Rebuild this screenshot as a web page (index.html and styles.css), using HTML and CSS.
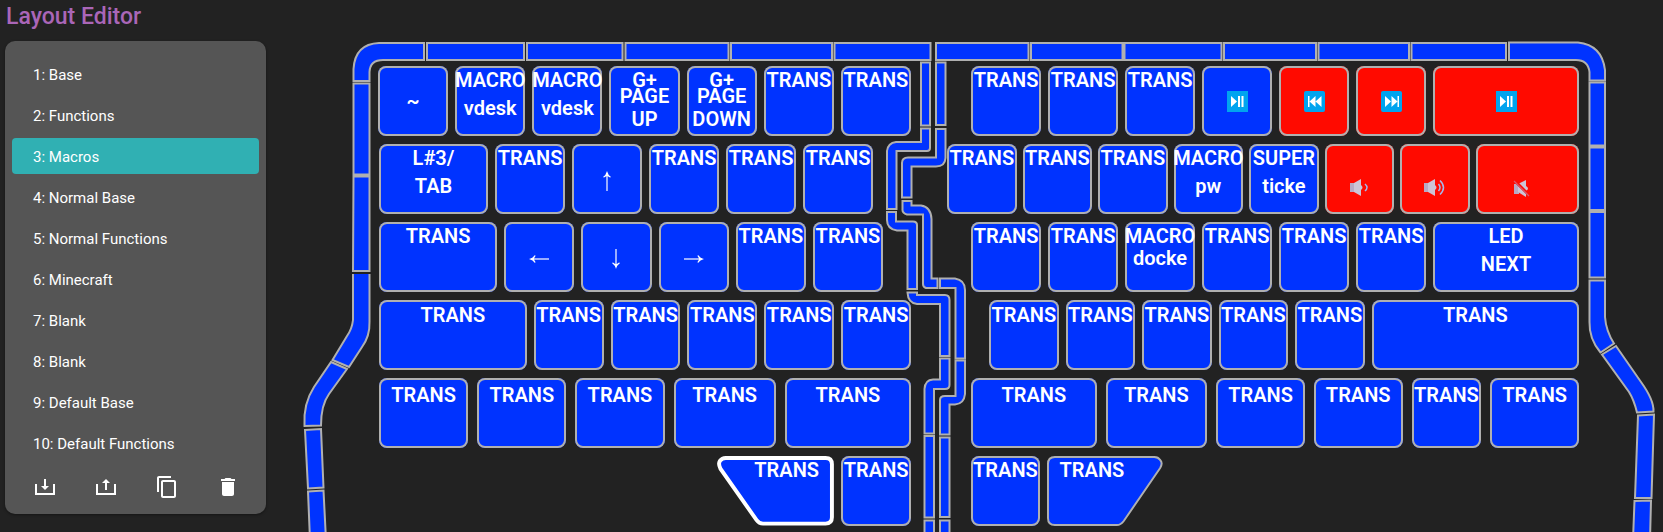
FILE: index.html
```html
<!DOCTYPE html>
<html lang="en">
<head>
<meta charset="utf-8">
<title>Layout Editor</title>
<link rel="stylesheet" href="styles.css">
</head>
<body>
<svg class="defs" aria-hidden="true">
  <symbol id="play-pause" viewBox="0 0 21 21"><path fill="#00a4ef" d="M0 0h21v21H0z"/><path fill="#fff" d="M4 5l6 5.500-6 5.500zM11 5h2v11h-2zM14.500 5h2v11h-2z"/></symbol>
  <symbol id="previous" viewBox="0 0 21 21"><rect width="21" height="21" rx="2" fill="#00a4ef"/><path fill="#fff" d="M4 5h1.500v11H4zM11.500 5v11l-6-5.500zM17.500 5v11l-6-5.500z"/></symbol>
  <symbol id="next" viewBox="0 0 21 21"><rect width="21" height="21" rx="2" fill="#00a4ef"/><path fill="#fff" d="M4 5l6 5.500L4 16zM10.500 5l6 5.500-6 5.500zM16.500 5H18v11h-1.500z"/></symbol>
  <symbol id="arrow" viewBox="0 0 22 22"><path fill="none" stroke="#fff" stroke-width="1.200" d="M21 11H3"/><path fill="#fff" d="M1 11Q5 10 7 7L7.500 8Q6 10 6 11Q6 12 7.500 14L7 15Q5 12 1 11Z"/></symbol>
</svg>
<h1 class="title">Layout Editor</h1>
<div class="editor">
  <aside class="layers">
    <button class="layer">1: Base</button>
    <button class="layer">2: Functions</button>
    <button class="layer layer-active" aria-current="true">3: Macros</button>
    <button class="layer">4: Normal Base</button>
    <button class="layer">5: Normal Functions</button>
    <button class="layer">6: Minecraft</button>
    <button class="layer">7: Blank</button>
    <button class="layer">8: Blank</button>
    <button class="layer">9: Default Base</button>
    <button class="layer">10: Default Functions</button>
    <div class="tools">
      <button class="tool" aria-label="Import"><svg viewBox="0 0 24 24"><path fill="none" stroke="#fff" stroke-width="2" d="M3 9v10h18V9M12 4v8"/><path fill="#fff" d="M8 11h8l-4 4z"/></svg></button>
      <button class="tool" aria-label="Export"><svg viewBox="0 0 24 24"><path fill="none" stroke="#fff" stroke-width="2" d="M3 9v10h18V9M12 7v8"/><path fill="#fff" d="M8 8h8l-4-4z"/></svg></button>
      <button class="tool" aria-label="Copy"><svg viewBox="0 0 24 24"><path fill="#fff" d="M16 1H4c-1.100 0-2 .9-2 2v14h2V3h12V1zm3 4H8c-1.100 0-2 .9-2 2v14c0 1.100.9 2 2 2h11c1.100 0 2-.9 2-2V7c0-1.100-.9-2-2-2zm0 16H8V7h11v14z"/></svg></button>
      <button class="tool" aria-label="Delete"><svg viewBox="0 0 24 24"><path fill="#fff" d="M6 19c0 1.100.9 2 2 2h8c1.100 0 2-.9 2-2V7H6v12zM19 4h-3.500l-1-1h-5l-1 1H5v2h14V4z"/></svg></button>
    </div>
  </aside>

  <main class="board">
    <svg class="lights" viewBox="290 41 1373 491" preserveAspectRatio="none" aria-hidden="true">
      <!-- top edge -->
      <path d="M353.500 81V69Q355 44 379 43H424V60H383Q370 60 369.500 72V81Z"/>
      <path d="M427 43H524V60H427ZM527 43H622.500V60H527ZM625.500 43H728.500V60H625.500ZM731 43H832V60H731ZM834.500 43H930.500V60H834.500Z"/>
      <path d="M936 43H1028.500V60H936ZM1031 43H1122.500V60H1031ZM1124.500 43H1221.500V60H1124.500ZM1224 43H1316V60H1224ZM1318.500 43H1409V60H1318.500ZM1411.500 43H1506V60H1411.500Z"/>
      <path d="M1509 42.500H1578Q1602 45 1605 70V80.500H1589.500V72Q1588 60 1576 60H1509Z"/>
      <!-- left edge -->
      <path d="M353.500 83.500H369.500V174.500H353.500ZM353.500 176.500H369.500V271H353Z"/>
      <path d="M353 274V320Q352 329 347 336L332.500 360L349 367L362 347Q370 336 369.500 322V274"/>
      <path d="M331 362L347 369L329 394Q321 405 321 425.500L304.500 426Q303 404 314 387Z"/>
      <path d="M305 430L321 429L323.500 487.500L308 488.500ZM308 491.500L323.500 490.500L326 540H310Z"/>
      <!-- right edge -->
      <path d="M1589.500 82.500H1605V145.500H1589.500ZM1589.500 147.500H1605V210H1589.500ZM1589.500 212H1605V277.500H1589.500Z"/>
      <path d="M1589.500 280.500H1605V317Q1606 331 1614 343.500L1600.500 352.500Q1589 339 1589.500 322Z"/>
      <path d="M1602 354.500L1616 346L1641 382Q1654 400 1653.500 411.500L1637 412.500Q1634 400 1629 392Z"/>
      <path d="M1638 415.500L1654 414.500L1651.500 498H1635ZM1634.500 501L1651 500.500L1650 540H1633Z"/>
      <!-- inner edge of the left half -->
      <path d="M921 62.500H930V125.500H921ZM921 128.500H930V148Q930 151 927 151H896.500V209H887V151Q888 143 896 142H921Z"/>
      <path d="M887 212H896V221.500H913Q917 221.500 917 225V289H907.500V230.500H897Q887 229 887 220Z"/>
      <path d="M907.500 292.500H917V295H945Q949.500 295 949.500 300V356H940V304H917Q908 303 907.500 292.500Z"/>
      <path d="M940 358.500H949.500V385Q949.500 389 945 389H934V433.500H924.500V389Q925 380 933 379.500H940ZM924.500 436H934V517.500H924.500ZM924.500 520.500H934V540H924.500Z"/>
      <!-- inner edge of the right half -->
      <path d="M936 62.500H945.500V125H936ZM936 129H945.500V158Q945 166.500 936 166.500H911.500V197.500H902V163Q902 157.500 908 157.500H936Z"/>
      <path d="M902.500 201H911.500V205.500H921Q931 207 931.500 219V278.500H937.500V288H926Q923 287 923 284V214.500H907Q902 213 902.500 209Z"/>
      <path d="M940 278.500H955Q965 280 965 290V358.500H955.500V288H940Z"/>
      <path d="M955.500 360.500H965V394Q964 404 955 404.500H949.500V434.500H940V400Q940 396 945 396H955.500ZM940 437.500H949.500V517H940ZM940 520.500H949.500V540H940Z"/>
    </svg>

    <div class="half half-left">
      <div class="row">
        <button class="key center"><span>~</span></button>
        <button class="key"><span>MACRO</span><span>vdesk</span></button>
        <button class="key"><span>MACRO</span><span>vdesk</span></button>
        <button class="key"><span>G+</span><span class="tuck">PAGE</span><span class="last">UP</span></button>
        <button class="key"><span>G+</span><span class="tuck">PAGE</span><span class="last">DOWN</span></button>
        <button class="key"><span>TRANS</span></button>
        <button class="key"><span>TRANS</span></button>
      </div>
      <div class="row row-tab">
        <button class="key w109"><span>L#3/</span><span>TAB</span></button>
        <button class="key"><span>TRANS</span></button>
        <button class="key center" aria-label="Up"><svg class="arrow up"><use href="#arrow"/></svg></button>
        <button class="key"><span>TRANS</span></button>
        <button class="key"><span>TRANS</span></button>
        <button class="key"><span>TRANS</span></button>
      </div>
      <div class="row row-caps">
        <button class="key w118"><span>TRANS</span></button>
        <button class="key center" aria-label="Left"><svg class="arrow"><use href="#arrow"/></svg></button>
        <button class="key center" aria-label="Down"><svg class="arrow down"><use href="#arrow"/></svg></button>
        <button class="key center" aria-label="Right"><svg class="arrow right"><use href="#arrow"/></svg></button>
        <button class="key"><span>TRANS</span></button>
        <button class="key"><span>TRANS</span></button>
      </div>
      <div class="row row-shift row-shift-left">
        <button class="key w148"><span>TRANS</span></button>
        <button class="key"><span>TRANS</span></button>
        <button class="key"><span>TRANS</span></button>
        <button class="key"><span>TRANS</span></button>
        <button class="key"><span>TRANS</span></button>
        <button class="key"><span>TRANS</span></button>
      </div>
      <div class="row row-mods row-mods-left">
        <button class="key w89"><span>TRANS</span></button>
        <button class="key w89"><span>TRANS</span></button>
        <button class="key w89"><span>TRANS</span></button>
        <button class="key w102"><span>TRANS</span></button>
        <button class="key w126"><span>TRANS</span></button>
      </div>
      <div class="row row-thumb-left">
        <button class="key thumb thumb-left">
          <svg class="shape" viewBox="0 0 120 72" preserveAspectRatio="none"><path fill="#03f" stroke="#fff" stroke-width="4" d="M9 2H111Q117.500 2 117.500 8.500V63Q117.500 69.500 111 69.500H47Q43 69.500 40.500 66L3.500 13Q1 8 3 5Q5 2 9 2Z"/></svg>
          <span>TRANS</span>
        </button>
        <button class="key"><span>TRANS</span></button>
      </div>
    </div>

    <div class="half half-right">
      <div class="row row-inset">
        <button class="key"><span>TRANS</span></button>
        <button class="key"><span>TRANS</span></button>
        <button class="key"><span>TRANS</span></button>
        <button class="key center" aria-label="Play or pause"><svg class="media"><use href="#play-pause"/></svg></button>
        <button class="key red center" aria-label="Previous track"><svg class="media"><use href="#previous"/></svg></button>
        <button class="key red center" aria-label="Next track"><svg class="media"><use href="#next"/></svg></button>
        <button class="key red center w146" aria-label="Play or pause"><svg class="media"><use href="#play-pause"/></svg></button>
      </div>
      <div class="row row-dense">
        <button class="key"><span>TRANS</span></button>
        <button class="key"><span>TRANS</span></button>
        <button class="key"><span>TRANS</span></button>
        <button class="key"><span>MACRO</span><span>pw</span></button>
        <button class="key"><span>SUPER</span><span>ticke</span></button>
        <button class="key red center low" aria-label="Volume down"><svg class="media" viewBox="0 0 21 21"><path fill="#b8a9c4" d="M1 6h5v9H1z"/><path fill="#cdc4d6" d="M5 6l7-4v17l-7-4z"/><path fill="#cdc4d6" d="M12 8q3 2.500 0 5z"/><path fill="none" stroke="#a5b8ec" stroke-width="1.500" d="M16 7q4 3.500 0 7"/></svg></button>
        <button class="key red center low" aria-label="Volume up"><svg class="media" viewBox="0 0 21 21"><path fill="#b8a9c4" d="M0 6h5v9H0z"/><path fill="#cdc4d6" d="M4 6l7-4v17l-7-4z"/><path fill="#cdc4d6" d="M11 8q3 2.500 0 5z"/><path fill="none" stroke="#a5b8ec" stroke-width="1.500" d="M14.500 7q3 3.500 0 7M16 3.500q7 7 0 14"/></svg></button>
        <button class="key red center low mute w104" aria-label="Mute"><svg class="media" viewBox="0 0 21 21"><path fill="#b8a9c4" d="M3 7h5v10H3z"/><path fill="#cdc4d6" d="M7 7l8-4v17l-8-5z"/><path fill="#cdc4d6" d="M15 9q4 2.500 0 5z"/><path stroke="#ff0a00" stroke-width="3" d="M3 3l16 16"/><path stroke="#d9566a" stroke-width="1.300" d="M3 4l15 15"/></svg></button>
      </div>
      <div class="row row-inset">
        <button class="key"><span>TRANS</span></button>
        <button class="key"><span>TRANS</span></button>
        <button class="key"><span>MACRO</span><span class="near">docke</span></button>
        <button class="key"><span>TRANS</span></button>
        <button class="key"><span>TRANS</span></button>
        <button class="key"><span>TRANS</span></button>
        <button class="key w146"><span>LED</span><span>NEXT</span></button>
      </div>
      <div class="row row-shift row-inset-more">
        <button class="key"><span>TRANS</span></button>
        <button class="key"><span>TRANS</span></button>
        <button class="key"><span>TRANS</span></button>
        <button class="key"><span>TRANS</span></button>
        <button class="key"><span>TRANS</span></button>
        <button class="key w209"><span>TRANS</span></button>
      </div>
      <div class="row row-mods row-inset">
        <button class="key w126"><span>TRANS</span></button>
        <button class="key w102"><span>TRANS</span></button>
        <button class="key w89"><span>TRANS</span></button>
        <button class="key w89"><span>TRANS</span></button>
        <button class="key"><span>TRANS</span></button>
        <button class="key w89"><span>TRANS</span></button>
      </div>
      <div class="row row-inset row-thumb-right">
        <button class="key"><span>TRANS</span></button>
        <button class="key thumb thumb-right">
          <svg class="shape" viewBox="0 0 118 70" preserveAspectRatio="none"><path fill="#03f" stroke="#b0b0b0" stroke-width="2" d="M109 1H8Q1 1 1 8V62Q1 69 8 69H71Q75 69 78 65L115 12Q118 7 115 4Q113 1 109 1Z"/></svg>
          <span>TRANS</span>
        </button>
      </div>
    </div>
  </main>
</div>
</body>
</html>
```

FILE: styles.css
```css
* {
  box-sizing: border-box;
}

body {
  margin: 0;
  height: 100vh;
  overflow: hidden;
  display: flex;
  flex-direction: column;
  background: #222;
  color: #fff;
  font-family: Roboto, "Open Sans", sans-serif;
}

button {
  margin: 0;
  padding: 0;
  border: 0;
  background: none;
  color: inherit;
  font: inherit;
  cursor: pointer;
}

.defs {
  display: none;
}

.title {
  margin: 0;
  padding-left: 6px;
  height: 41px;
  font-size: 23px;
  font-weight: 500;
  line-height: 34px;
  color: #aa66b8;
}

.editor {
  flex: 1;
  min-height: 0;
  display: flex;
  align-items: flex-start;
  gap: 24px;
  padding-left: 5px;
}

/* Layer list */
.layers {
  flex: none;
  width: 261px;
  padding: 15px 7px;
  display: flex;
  flex-direction: column;
  gap: 5px;
  border-radius: 10px;
  background: #555;
  box-shadow: 0 1px 3px rgba(0, 0, 0, 0.4);
}

.layer {
  height: 36px;
  padding: 2px 0 0 21px;
  border-radius: 4px;
  font-size: 15px;
  text-align: left;
}

.layer-active {
  background: #30b0b3;
}

.tools {
  display: grid;
  grid-template-columns: repeat(4, 1fr);
  margin-top: 9px;
  padding-left: 2px;
}

.tool {
  display: grid;
  place-items: center;
}

.tool svg {
  display: block;
  width: 24px;
  height: 24px;
}

/* Keyboard */
.board {
  flex: 1;
  min-width: 0;
  height: 100%;
  display: grid;
  grid-template-columns: 88fr 533fr 36fr 632fr 84fr;
  grid-template-rows: minmax(0, 1fr);
}

.lights {
  grid-area: 1 / 1 / 2 / -1;
  width: 100%;
  height: 491px;
  fill: #03f;
  stroke: #b0b0b0;
  stroke-width: 2;
}

.half {
  min-width: 0;
  padding-top: 25px;
  display: flex;
  flex-direction: column;
  gap: 8px;
}

.half-left {
  grid-area: 1 / 2;
}

.half-right {
  grid-area: 1 / 4;
}

.row {
  display: flex;
  gap: 7px;
}

.row-tab {
  padding: 0 38px 0 1px;
}

.row-caps {
  padding: 0 28px 0 1px;
}

.row-shift-left,
.row-mods-left {
  padding-left: 1px;
}

.row-inset {
  padding-left: 24px;
}

.row-inset-more {
  padding-left: 42px;
}

.row-dense {
  gap: 6px;
}

.row-mods {
  gap: 9px;
}

.row-thumb-left {
  padding-left: 339px;
}

.row-thumb-right {
  padding-right: 416px;
}

.key {
  flex: 70 1 0;
  min-width: 0;
  height: 70px;
  display: flex;
  flex-direction: column;
  align-items: center;
  border-radius: 8px;
  background: #03f;
  box-shadow: inset 0 0 0 2px #b0b0b0;
  font-size: 20px;
  font-weight: 600;
  line-height: 28px;
}

.row-shift .key {
  padding-top: 1px;
}

.row-mods .key {
  padding-top: 3px;
}

.w89 { flex-grow: 89; }
.w102 { flex-grow: 102; }
.w104 { flex-grow: 104; }
.w109 { flex-grow: 109; }
.w118 { flex-grow: 118; }
.w126 { flex-grow: 126; }
.w146 { flex-grow: 146; }
.w148 { flex-grow: 148; }
.w209 { flex-grow: 209; }

.red {
  background: #ff0a00;
}

.center {
  justify-content: center;
}

.low {
  padding-top: 16px;
}

.mute .media {
  margin-right: 12px;
}

.tuck {
  margin-top: -8px;
  line-height: 20px;
}

.last {
  line-height: 26px;
}

.near {
  line-height: 16px;
}

.media {
  width: 21px;
  height: 21px;
}

.arrow {
  width: 22px;
  height: 22px;
  margin-top: 4px;
}

.up { transform: rotate(90deg); }
.down { transform: rotate(-90deg); }
.right { transform: rotate(180deg); }

/* Slanted thumb keys: label and outline share one grid cell */
.thumb {
  flex-grow: 118;
  display: grid;
  justify-items: center;
  align-items: start;
  background: none;
  box-shadow: none;
}

.thumb > * {
  grid-area: 1 / 1;
}

.shape {
  width: 100%;
  height: 70px;
  overflow: visible;
}

.thumb-left span {
  padding-left: 22px;
}

.thumb-right span {
  padding-right: 26px;
}
```
